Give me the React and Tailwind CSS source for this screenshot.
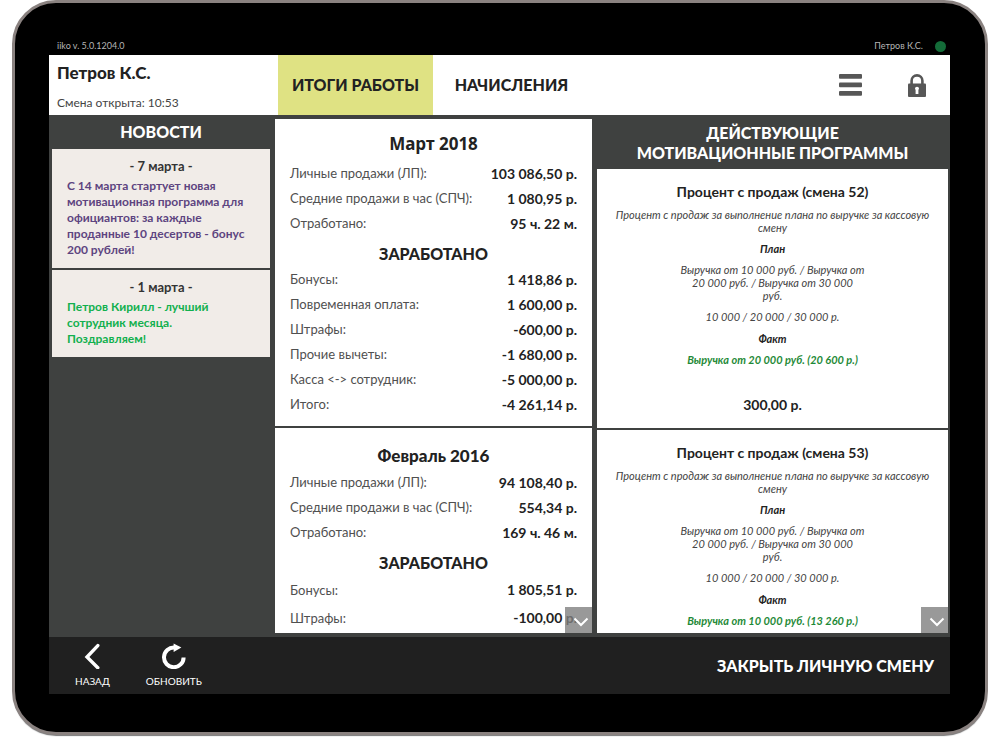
import React from "react";

const news = [
  {
    date: "- 7 марта -",
    text: "С 14 марта стартует новая мотивационная программа для официантов: за каждые проданные 10 десертов - бонус 200 рублей!",
    tone: "text-[#5d4480]",
  },
  {
    date: "- 1 марта -",
    text: "Петров Кирилл - лучший сотрудник месяца. Поздравляем!",
    tone: "text-[#12b04e]",
  },
];

const months = [
  {
    title: "Март 2018",
    titleClass: "font-['Noto_Sans','Open_Sans',sans-serif] font-bold text-[17px]",
    work: [
      ["Личные продажи (ЛП):", "103 086,50 р."],
      ["Средние продажи в час (СПЧ):", "1 080,95 р."],
      ["Отработано:", "95 ч. 22 м."],
    ],
    earned: [
      ["Бонусы:", "1 418,86 р."],
      ["Повременная оплата:", "1 600,00 р."],
      ["Штрафы:", "-600,00 р."],
      ["Прочие вычеты:", "-1 680,00 р."],
      ["Касса <-> сотрудник:", "-5 000,00 р."],
      ["Итого:", "-4 261,14 р."],
    ],
  },
  {
    title: "Февраль 2016",
    titleClass: "font-black text-[17px]",
    work: [
      ["Личные продажи (ЛП):", "94 108,40 р."],
      ["Средние продажи в час (СПЧ):", "554,34 р."],
      ["Отработано:", "169 ч. 46 м."],
    ],
    earned: [
      ["Бонусы:", "1 805,51 р."],
      ["Штрафы:", "-100,00 р."],
    ],
  },
];

const programs = [
  { title: "Процент с продаж (смена 52)", fact: "Выручка от 20 000 руб. (20 600 р.)", total: "300,00 р." },
  { title: "Процент с продаж (смена 53)", fact: "Выручка от 10 000 руб. (13 260 р.)" },
];

function Rows({ rows, roomy }) {
  return (
    <table className="w-full text-sm">
      <tbody>
        {rows.map(([label, value]) => (
          <tr key={label} className={roomy ? "h-7" : "h-[25px]"}>
            <th scope="row" className="p-0 text-left text-[13px] font-normal whitespace-nowrap text-[#505050]">{label}</th>
            <td className="p-0 text-right font-bold whitespace-nowrap text-[#222]">{value}</td>
          </tr>
        ))}
      </tbody>
    </table>
  );
}

function ScrollDown({ label }) {
  return (
    <button type="button" aria-label={label} className="absolute right-0 bottom-0 flex h-[26px] w-[27px] items-center justify-center bg-[#808080]/80">
      <svg viewBox="0 0 16 10" className="mt-1 ml-1 h-[10px] w-4" fill="none" stroke="#fff" strokeWidth="2">
        <path d="M1.5 1.5 L8 8 L14.5 1.5" />
      </svg>
    </button>
  );
}

export default function App() {
  return (
    <div className="h-screen min-h-[600px] overflow-hidden bg-white px-3 pb-[3px] font-['Lato','Liberation_Sans',sans-serif] text-[#222]">
      <div className="flex h-full flex-col rounded-[44px] border-[3px] border-[#8a8280] bg-black pr-[35px] pb-[38px] pl-[34px] shadow-[0_2px_1px_-1px_#777]">
        <div className="flex h-[52px] shrink-0 items-end justify-between pr-1 pb-[2px] pl-2 text-[9px] leading-[14px] text-[#b5b5b5]">
          <span>iiko v. 5.0.1204.0</span>
          <span className="flex items-center gap-3">
            Петров К.С.
            <span className="size-[11px] rounded-full bg-[#146c39]" />
          </span>
        </div>

        <header className="flex h-[60px] shrink-0 bg-white">
          <div className="flex w-[229px] flex-col justify-between pt-2 pb-1 pl-2">
            <h1 className="text-[17px] leading-5 font-black">Петров К.С.</h1>
            <p className="text-xs leading-4 text-[#444]">Смена открыта: 10:53</p>
          </div>
          <nav className="flex text-base font-black">
            <button type="button" className="w-[155px] bg-[#dfe283]">ИТОГИ РАБОТЫ</button>
            <button type="button" className="w-[157px]">НАЧИСЛЕНИЯ</button>
          </nav>
          <div className="ml-auto flex items-center gap-[46px] pr-6 text-[#575757]">
            <button type="button" aria-label="Меню">
              <svg viewBox="0 0 23 22" className="h-[22px] w-[23px]" fill="currentColor">
                <rect y="0" width="23" height="4.8" rx="1" />
                <rect y="8.5" width="23" height="4.8" rx="1" />
                <rect y="17" width="23" height="4.8" rx="1" />
              </svg>
            </button>
            <button type="button" aria-label="Блокировка">
              <svg viewBox="0 0 18 23" className="h-[23px] w-[18px]">
                <path d="M3.6 10 V6.8 a5.4 5.4 0 0 1 10.8 0 V10" fill="none" stroke="currentColor" strokeWidth="2.6" />
                <rect y="9.5" width="18" height="13.5" rx="1" fill="currentColor" />
                <path d="M7 14.4 q0 -1.6 2 -1.6 t2 1.6 q0 .8 -.6 1.4 V20 H7.6 V15.8 q-.6 -.6 -.6 -1.4z" fill="#fff" />
              </svg>
            </button>
          </div>
        </header>

        <main className="grid min-h-0 flex-1 grid-cols-[218fr_317fr_351fr] grid-rows-[minmax(0,1fr)] gap-[5px] bg-[#3f4140] pr-[2px] pb-1 pl-[3px]">
          <section>
            <h2 className="py-[7px] text-center text-base leading-5 font-black text-white">НОВОСТИ</h2>
            <div className="flex flex-col gap-[2px]">
              {news.map((item) => (
                <article key={item.date} className="bg-[#f1ece8] pt-[7px] pb-[10px]">
                  <h3 className="text-center text-[13px] leading-5 font-bold text-[#333]">{item.date}</h3>
                  <p className={`mt-[2px] pr-6 pl-[15px] text-[12px] leading-4 font-bold ${item.tone}`}>{item.text}</p>
                </article>
              ))}
            </div>
          </section>

          <section className="relative mt-1 flex flex-col gap-[2px] overflow-hidden bg-white">
            {months.map((m, i) => (
              <article key={m.title} className={`shrink-0 bg-white px-[15px] ${i ? "pt-[14px]" : "pt-[11px] pb-[9px] shadow-[0_2px_#3f4140]"}`}>
                <h3 className={`text-center leading-7 ${i ? "" : "mb-[3px]"} ${m.titleClass}`}>{m.title}</h3>
                <Rows rows={m.work} />
                <h4 className="pt-1 text-center text-base leading-[27px] font-black">ЗАРАБОТАНО</h4>
                <Rows rows={m.earned} roomy={i > 0} />
              </article>
            ))}
            <ScrollDown label="Прокрутить итоги" />
          </section>

          <section className="flex flex-col">
            <h2 className="px-4 pt-2 pb-[6px] text-center text-base leading-5 font-black text-white">
              ДЕЙСТВУЮЩИЕ<br />МОТИВАЦИОННЫЕ ПРОГРАММЫ
            </h2>
            <div className="relative flex min-h-0 flex-1 flex-col gap-[2px] overflow-hidden">
              {programs.map((p) => (
                <article key={p.title} className="shrink-0 bg-white px-3 pt-3 pb-3 text-center text-[11px] leading-[13px] text-[#444] italic last-of-type:grow">
                  <h3 className="text-sm leading-[22px] font-bold text-[#222] not-italic">{p.title}</h3>
                  <p className="mt-[5px]">Процент с продаж за выполнение плана по выручке за кассовую смену</p>
                  <h4 className="mt-2 font-bold text-[#222]">План</h4>
                  <p className="mt-2">
                    Выручка от 10 000 руб. / Выручка от<br />20 000 руб. / Выручка от 30 000<br />руб.
                  </p>
                  <p className="mt-2">10 000 / 20 000 / 30 000 р.</p>
                  <h4 className="mt-[9px] font-bold text-[#222]">Факт</h4>
                  <p className="mt-2 font-bold text-[#1f8a38]">{p.fact}</p>
                  {p.total && <p className="mt-7 text-sm leading-[22px] font-bold text-[#222] not-italic">{p.total}</p>}
                </article>
              ))}
              <ScrollDown label="Прокрутить программы" />
            </div>
          </section>
        </main>

        <footer className="flex h-[57px] shrink-0 items-center justify-between bg-[#202020] pr-4 pl-[26px] text-white">
          <div className="flex gap-9 text-[10px] leading-[14px]">
            <button type="button" className="flex flex-col items-center gap-[5px]">
              <svg viewBox="0 0 16 26" className="h-[26px] w-4" fill="none" stroke="#fff" strokeWidth="3.4" strokeLinecap="round">
                <path d="M13.8 2.6 L3 14 L13.8 24.8" strokeLinejoin="miter" />
              </svg>
              НАЗАД
            </button>
            <button type="button" className="flex flex-col items-center gap-[5px]">
              <svg viewBox="0 0 26 26" className="size-[26px]">
                <path d="M13.5 4.6 A9.8 9.8 0 1 0 22.6 14.4" fill="none" stroke="#fff" strokeWidth="4" />
                <path d="M12.6 .6 L20.4 4.4 L12.6 9z" fill="#fff" />
              </svg>
              ОБНОВИТЬ
            </button>
          </div>
          <button type="button" className="text-base font-black">ЗАКРЫТЬ ЛИЧНУЮ СМЕНУ</button>
        </footer>
      </div>
    </div>
  );
}
